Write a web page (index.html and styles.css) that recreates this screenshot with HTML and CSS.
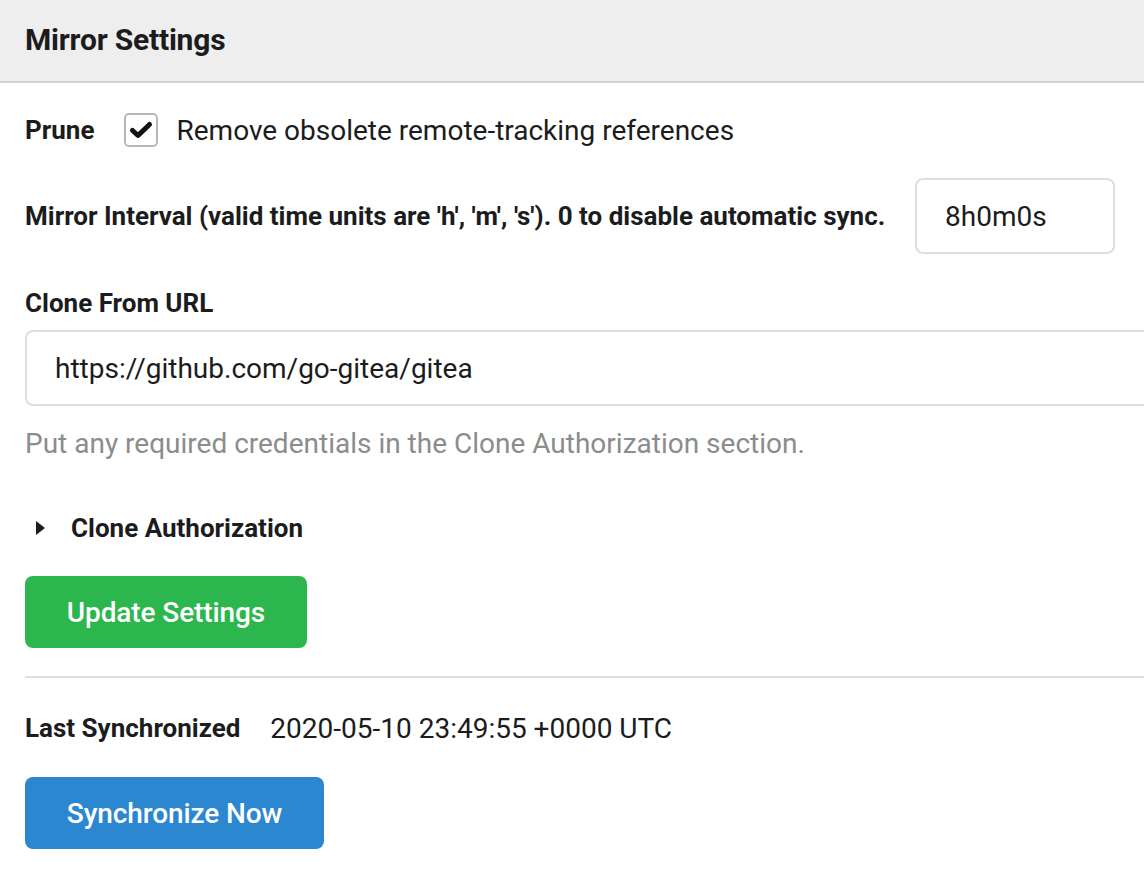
FILE: index.html
```html
<!DOCTYPE html>
<html>
<head>
<meta charset="utf-8">
<link rel="stylesheet" href="styles.css">
</head>
<body>
<div class="page">
  <h4 class="panel-header">Mirror Settings</h4>
  <div class="panel-body">
    <div class="field inline">
      <label class="label">Prune</label>
      <span class="checkbox">
        <span class="box"><svg viewBox="0 0 26 26" width="26" height="26"><path d="M4.5 13.5 L10 18.5 L21.5 7.5" fill="none" stroke="#111" stroke-width="5" stroke-linecap="round" stroke-linejoin="round"/></svg></span>
        <span class="cb-text">Remove obsolete remote-tracking references</span>
      </span>
    </div>
    <div class="field inline interval">
      <label class="label">Mirror Interval (valid time units are 'h', 'm', 's'). 0 to disable automatic sync.</label>
      <div class="input small-input">8h0m0s</div>
    </div>
    <div class="field">
      <label class="label block">Clone From URL</label>
      <div class="input wide-input">https://github.com/go-gitea/gitea</div>
      <p class="help">Put any required credentials in the Clone Authorization section.</p>
    </div>
    <div class="details">
      <span class="caret"></span>
      <span class="label">Clone Authorization</span>
    </div>
    <div class="field">
      <button class="btn green">Update Settings</button>
    </div>
    <div class="divider"></div>
    <div class="field inline sync">
      <span class="label">Last Synchronized</span>
      <span class="value">2020-05-10 23:49:55 +0000 UTC</span>
    </div>
    <div class="field">
      <button class="btn blue">Synchronize Now</button>
    </div>
  </div>
</div>
</body>
</html>
```
FILE: styles.css
```css
html, body {
  margin: 0;
  padding: 0;
  background: #fff;
  overflow: hidden;
}
body {
  font-family: Roboto, "Liberation Sans", sans-serif;
  color: #1b1c1d;
  width: 1144px;
  height: 874px;
}
.page {
  width: 1200px;
}
.panel-header {
  margin: 0;
  height: 83px;
  box-sizing: border-box;
  padding: 0 25px 2px;
  display: flex;
  align-items: center;
  background: #eeeeee;
  border-bottom: 2px solid #d4d4d5;
  font-size: 30px;
  font-weight: 700;
  letter-spacing: -0.2px;
}
.panel-body {
  padding: 0 0 0 25px;
}
.label {
  font-weight: 700;
  font-size: 26px;
  color: #1b1c1d;
}
.field.inline {
  display: flex;
  align-items: center;
}
.field.inline:first-child {
  margin-top: 30px;
  height: 34px;
}
.checkbox {
  display: flex;
  align-items: center;
  margin-left: 30px;
}
.box {
  width: 30px;
  height: 30px;
  border: 2px solid #b7b7b7;
  border-radius: 5px;
  display: flex;
  align-items: center;
  justify-content: center;
}
.cb-text {
  font-size: 28px;
  margin-left: 18px;
}
.interval {
  margin-top: 31px;
}
.interval .label {
  width: 890px;
}
.input {
  box-sizing: border-box;
  border: 2px solid #dedede;
  border-radius: 8px;
  font-size: 28px;
  display: flex;
  align-items: center;
  padding: 0 28px;
  color: #1b1c1d;
}
.small-input {
  width: 200px;
  height: 76px;
}
.label.block {
  display: block;
  margin-top: 34px;
  line-height: 30px;
}
.wide-input {
  margin-top: 12px;
  width: 1140px;
  height: 76px;
}
.help {
  margin: 21px 0 0;
  font-size: 28px;
  color: #8c8c8c;
  line-height: 34px;
}
.details {
  display: flex;
  align-items: center;
  margin-top: 50px;
  height: 34px;
}
.caret {
  width: 0;
  height: 0;
  border-top: 7px solid transparent;
  border-bottom: 7px solid transparent;
  border-left: 9px solid #1b1c1d;
  margin-left: 11px;
  margin-right: 26px;
}
.btn {
  border: none;
  border-radius: 8px;
  color: #fff;
  font-family: Roboto, "Liberation Sans", sans-serif;
  font-size: 28px;
  font-weight: 500;
  letter-spacing: -0.1px;
  height: 72px;
  padding: 0;
  cursor: pointer;
}
.green {
  margin-top: 31px;
  background: #2cb64e;
  width: 282px;
}
.blue {
  margin-top: 32px;
  background: #2a87d0;
  width: 299px;
}
.divider {
  margin-top: 28px;
  height: 2px;
  background: #dedede;
}
.sync {
  margin-top: 33px;
  height: 34px;
}
.value {
  font-size: 28px;
  margin-left: 30px;
}
```
